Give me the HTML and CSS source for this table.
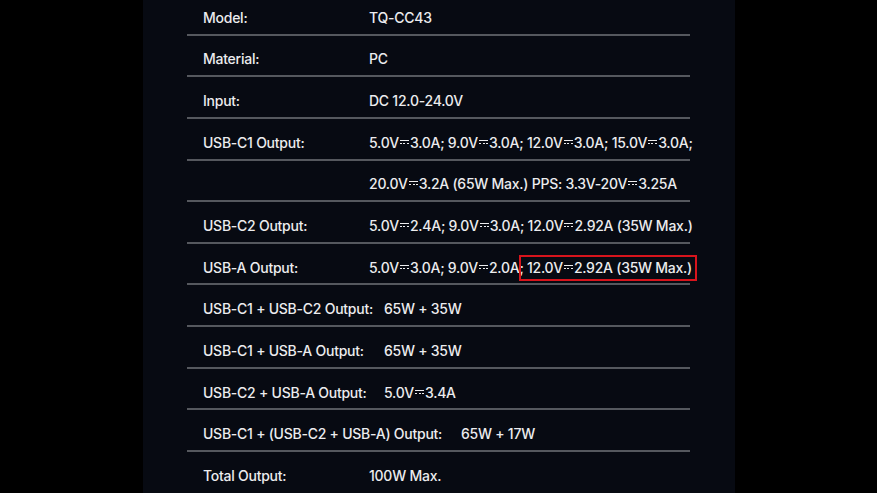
FILE: index.html
```html
<!DOCTYPE html>
<html>
<head>
<meta charset="utf-8">
<link rel="stylesheet" href="styles.css">
</head>
<body>
<div class="panel">
  <div class="specs">
    <div class="row"><span class="label">Model:</span><span class="value">TQ-CC43</span></div>
    <div class="row"><span class="label">Material:</span><span class="value">PC</span></div>
    <div class="row"><span class="label">Input:</span><span class="value">DC 12.0-24.0V</span></div>
    <div class="row"><span class="label">USB-C1 Output:</span><span class="value">5.0V<i class="dc"></i>3.0A; 9.0V<i class="dc"></i>3.0A; 12.0V<i class="dc"></i>3.0A; 15.0V<i class="dc"></i>3.0A;</span></div>
    <div class="row"><span class="label"></span><span class="value">20.0V<i class="dc"></i>3.2A (65W Max.) PPS: 3.3V-20V<i class="dc"></i>3.25A</span></div>
    <div class="row"><span class="label">USB-C2 Output:</span><span class="value">5.0V<i class="dc"></i>2.4A; 9.0V<i class="dc"></i>3.0A; 12.0V<i class="dc"></i>2.92A (35W Max.)</span></div>
    <div class="row"><span class="label">USB-A Output:</span><span class="value">5.0V<i class="dc"></i>3.0A; 9.0V<i class="dc"></i>2.0A<span class="mark">; 12.0V<i class="dc"></i>2.92A (35W Max.)</span></span></div>
    <div class="row"><span class="label wide">USB-C1 + USB-C2 Output:</span><span class="value">65W + 35W</span></div>
    <div class="row"><span class="label wide">USB-C1 + USB-A Output:</span><span class="value">65W + 35W</span></div>
    <div class="row"><span class="label wide">USB-C2 + USB-A Output:</span><span class="value">5.0V<i class="dc"></i>3.4A</span></div>
    <div class="row"><span class="label wider">USB-C1 + (USB-C2 + USB-A) Output:</span><span class="value">65W + 17W</span></div>
    <div class="row last"><span class="label">Total Output:</span><span class="value">100W Max.</span></div>
  </div>
</div>
</body>
</html>
```
FILE: styles.css
```css
html, body {
  margin: 0;
  padding: 0;
  background: #000;
  height: 493px;
  overflow: hidden;
}
.panel {
  width: 592px;
  height: 493px;
  margin-left: 143px;
  background: #070a12;
  overflow: hidden;
}
.specs {
  width: 503px;
  margin-left: 44px;
  margin-top: -6px;
  font-family: Inter, "Noto Sans", sans-serif;
  font-size: 14px;
  font-weight: 500;
  letter-spacing: -0.25px;
  color: #ececee;
}
.row {
  box-sizing: border-box;
  height: 41.65px;
  border-bottom: 2px solid #55585e;
  padding: 7px 0 0 16px;
  display: flex;
  align-items: center;
  white-space: nowrap;
}
.row.last { border-bottom-color: transparent; }
.label { width: 166px; flex: none; }
.label.wide { width: 181px; }
.label.wider { width: 258px; }
.dc {
  display: inline-block;
  width: 9px;
  height: 4px;
  margin: 0 1px;
  vertical-align: 0.28em;
  background:
    linear-gradient(#ececee, #ececee) 0 0 / 100% 1px no-repeat,
    repeating-linear-gradient(90deg, #ececee 0 2px, transparent 2px 3.5px) 0 100% / 100% 1px no-repeat;
}
.mark {
  position: relative;
}
.mark::after {
  content: "";
  position: absolute;
  left: 0px;
  right: -5px;
  top: -4px;
  bottom: -5px;
  border: 2px solid #d8141c;
}
```
